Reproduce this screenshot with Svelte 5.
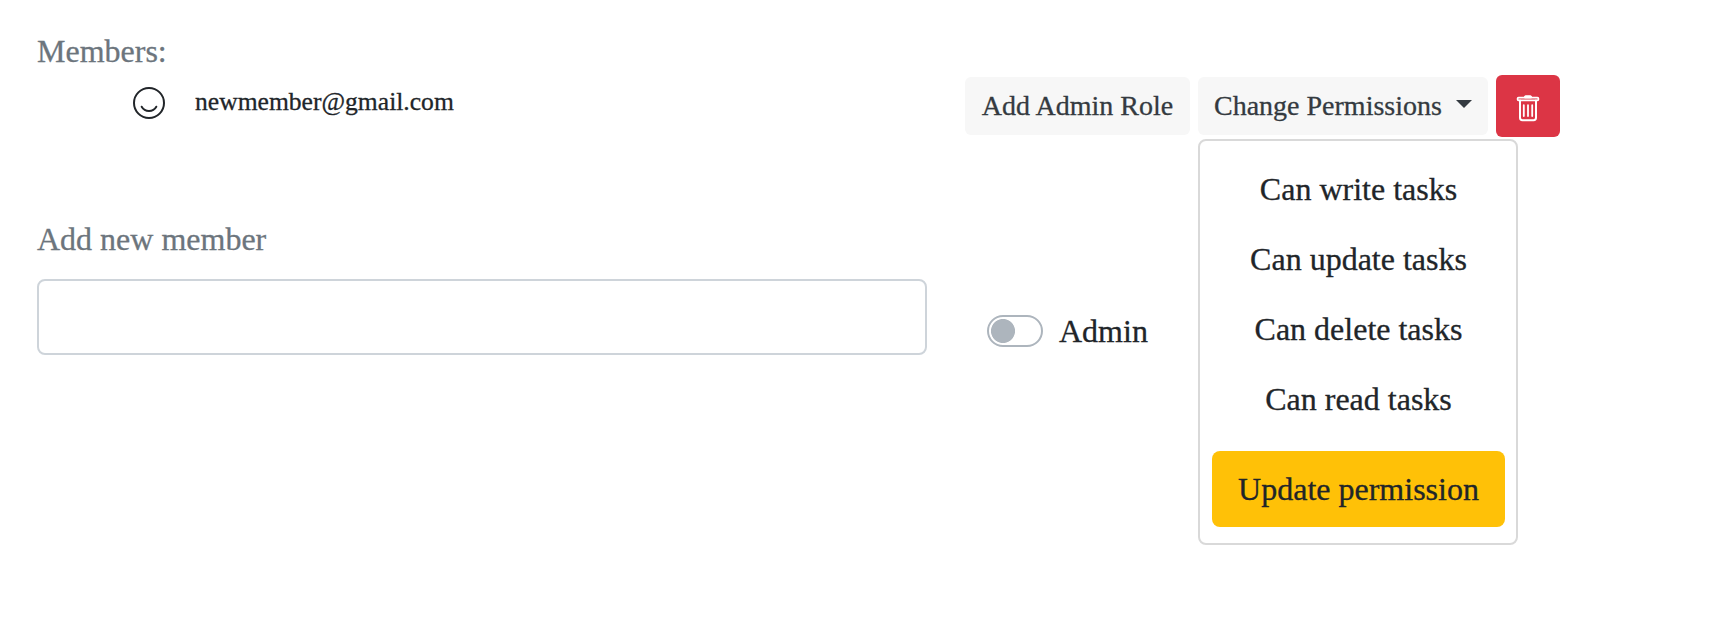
<script>
  const permissions = ['Can write tasks', 'Can update tasks', 'Can delete tasks', 'Can read tasks'];
  let open = $state(true);
  let admin = $state(false);
  let email = $state('');
</script>

<main>
  <h2>Members:</h2>
  <div class="member">
    <svg class="face" width="32" height="32" viewBox="0 0 32 32" fill="none" stroke="currentColor" stroke-width="2">
      <circle cx="16" cy="16" r="15" />
      <path d="M8.7 19.7a8.4 8.4 0 0 0 14.6 0" stroke-linecap="round" />
    </svg>
    <span class="email">newmember@gmail.com</span>
    <div class="actions">
      <button class="light role">Add Admin Role</button>
      <div class="dropdown">
        <button class="light" onclick={() => (open = !open)}>Change Permissions<span class="caret"></span></button>
        {#if open}
          <div class="menu">
            {#each permissions as permission}
              <div class="item">{permission}</div>
            {/each}
            <button class="update">Update permission</button>
          </div>
        {/if}
      </div>
      <button class="delete" aria-label="Remove">
        <svg width="24" height="28" viewBox="0 0 24 28" fill="none" stroke="#fff" stroke-linecap="round">
          <path d="M8.5 3.5v-.9q0-.8.8-.8h5.4q.8 0 .8.8v.9z" fill="#fff" stroke-width="1" />
          <rect x="1.6" y="3.7" width="20.8" height="2.6" rx="1" stroke-width="1.8" />
          <path d="M4 6.6V23.8q0 2.4 2.4 2.4h11.2q2.4 0 2.4-2.4V6.6" stroke-width="2" />
          <path d="M7.8 11.2v10.8M12 11.2v10.8M16.2 11.2v10.8" stroke-width="1.8" />
        </svg>
      </button>
    </div>
  </div>

  <label class="title" for="new-member">Add new member</label>
  <div class="add-row">
    <input id="new-member" class="field" type="text" bind:value={email} />
    <label class="switch">
      <input type="checkbox" bind:checked={admin} />
      <span>Admin</span>
    </label>
  </div>
</main>

<style>
  :global(body) {
    background: #fff;
  }
  main {
    box-sizing: border-box;
    width: 1736px;
    height: 622px;
    padding: 27px 37px 0;
    overflow: hidden;
    font: 32px/48px 'Liberation Serif', serif;
    color: #212529;
    -webkit-text-stroke: 0.3px currentColor;
  }
  h2,
  .title {
    display: block;
    margin: 0;
    font-size: 32px;
    font-weight: 400;
    color: #6c757d;
  }
  button {
    border: 0;
    margin: 0;
    font: inherit;
    color: inherit;
  }
  .member {
    display: flex;
    height: 62px;
    padding-left: 96px;
  }
  .face {
    margin-top: 12px;
  }
  .email {
    margin: 8px 0 0 30px;
    width: 770px;
    font-size: 25.6px;
    line-height: 38.4px;
  }
  .actions {
    display: flex;
    align-items: center;
    gap: 8px;
  }
  .light {
    display: flex;
    align-items: center;
    height: 58px;
    padding: 0 16px;
    border-radius: 6px;
    background: #f7f7f7;
    color: #343a40;
    font-size: 28px;
    line-height: 42px;
    white-space: nowrap;
  }
  .role {
    width: 225px;
    padding: 0;
    justify-content: center;
  }
  .dropdown {
    position: relative;
  }
  .dropdown .light {
    width: 290px;
  }
  .caret {
    margin: -4px 0 0 14px;
    border: 8px solid transparent;
    border-top-color: currentColor;
    border-bottom: 0;
  }
  .menu {
    position: absolute;
    top: 62px;
    left: 0;
    box-sizing: border-box;
    width: 320px;
    height: 406px;
    padding: 13px 11px 0 12px;
    border: 2px solid #d9d9d9;
    border-radius: 8px;
    background: #fff;
    text-align: center;
  }
  .item {
    padding: 11px 0;
  }
  .update {
    display: block;
    width: 100%;
    margin-top: 17px;
    padding: 14px 0;
    border-radius: 8px;
    background: #ffc107;
  }
  .delete {
    display: flex;
    align-items: center;
    justify-content: center;
    width: 64px;
    height: 62px;
    padding: 4px 0 0;
    border-radius: 6px;
    background: #dc3545;
  }
  .title {
    margin-top: 78px;
  }
  .add-row {
    display: flex;
    align-items: flex-start;
    margin-top: 16px;
  }
  .field {
    box-sizing: border-box;
    width: 890px;
    height: 76px;
    padding: 12px 24px;
    border: 2px solid #ced4da;
    border-radius: 8px;
    font: inherit;
    outline: 0;
  }
  .switch {
    display: flex;
    align-items: center;
    gap: 16px;
    margin: 28px 0 0 60px;
  }
  .switch input {
    appearance: none;
    box-sizing: border-box;
    width: 56px;
    height: 32px;
    margin: 0;
    border: 2px solid #adb5bd;
    border-radius: 16px;
    background: radial-gradient(circle at 14px 14px, #adb5bd 11.6px, transparent 12.4px);
  }
  .switch input:checked {
    background: radial-gradient(circle at 38px 14px, #adb5bd 11.6px, transparent 12.4px);
  }
</style>
